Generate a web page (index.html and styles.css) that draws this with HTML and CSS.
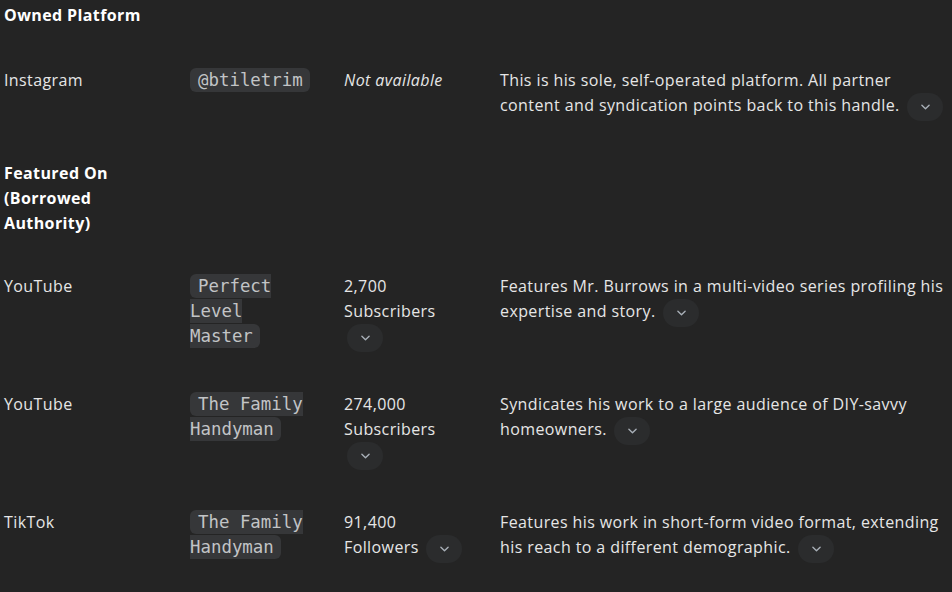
FILE: index.html
```html
<!DOCTYPE html>
<html lang="en">
<head>
<meta charset="utf-8">
<link rel="stylesheet" href="styles.css">
</head>
<body>
<table class="tbl">
  <colgroup>
    <col class="c1"><col class="c2"><col class="c3"><col class="c4">
  </colgroup>
  <tbody>
    <tr class="sec first">
      <td class="h">Owned Platform</td><td></td><td></td><td></td>
    </tr>
    <tr>
      <td>Instagram</td>
      <td><code class="chip">@btiletrim</code></td>
      <td><em>Not available</em></td>
      <td>This is his sole, self-operated platform. All partner content and syndication points back to this handle. <button class="pill" aria-label="expand"><svg viewBox="0 0 10 6" width="9" height="6"><path d="M1 1l4 4 4-4" fill="none" stroke="currentColor" stroke-width="1.5" stroke-linecap="round" stroke-linejoin="round"/></svg></button></td>
    </tr>
    <tr class="sec">
      <td class="h">Featured On (Borrowed Authority)</td><td></td><td></td><td></td>
    </tr>
    <tr>
      <td>YouTube</td>
      <td><code class="chip">Perfect Level Master</code></td>
      <td>2,700 Subscribers <button class="pill" aria-label="expand"><svg viewBox="0 0 10 6" width="9" height="6"><path d="M1 1l4 4 4-4" fill="none" stroke="currentColor" stroke-width="1.5" stroke-linecap="round" stroke-linejoin="round"/></svg></button></td>
      <td>Features Mr. Burrows in a multi-video series profiling his expertise and story. <button class="pill" aria-label="expand"><svg viewBox="0 0 10 6" width="9" height="6"><path d="M1 1l4 4 4-4" fill="none" stroke="currentColor" stroke-width="1.5" stroke-linecap="round" stroke-linejoin="round"/></svg></button></td>
    </tr>
    <tr>
      <td>YouTube</td>
      <td><code class="chip">The Family Handyman</code></td>
      <td>274,000 Subscribers <button class="pill" aria-label="expand"><svg viewBox="0 0 10 6" width="9" height="6"><path d="M1 1l4 4 4-4" fill="none" stroke="currentColor" stroke-width="1.5" stroke-linecap="round" stroke-linejoin="round"/></svg></button></td>
      <td>Syndicates his work to a large audience of DIY-savvy homeowners. <button class="pill" aria-label="expand"><svg viewBox="0 0 10 6" width="9" height="6"><path d="M1 1l4 4 4-4" fill="none" stroke="currentColor" stroke-width="1.5" stroke-linecap="round" stroke-linejoin="round"/></svg></button></td>
    </tr>
    <tr>
      <td>TikTok</td>
      <td><code class="chip">The Family Handyman</code></td>
      <td>91,400 Followers <button class="pill" aria-label="expand"><svg viewBox="0 0 10 6" width="9" height="6"><path d="M1 1l4 4 4-4" fill="none" stroke="currentColor" stroke-width="1.5" stroke-linecap="round" stroke-linejoin="round"/></svg></button></td>
      <td>Features his work in short-form video format, extending his reach to a different demographic. <button class="pill" aria-label="expand"><svg viewBox="0 0 10 6" width="9" height="6"><path d="M1 1l4 4 4-4" fill="none" stroke="currentColor" stroke-width="1.5" stroke-linecap="round" stroke-linejoin="round"/></svg></button></td>
    </tr>
  </tbody>
</table>
</body>
</html>
```
FILE: styles.css
```css
html, body {
  margin: 0;
  padding: 0;
  background: #242424;
}
body {
  font-family: "Open Sans", "Liberation Sans", sans-serif;
  font-size: 16px;
  line-height: 25px;
  letter-spacing: 0.4px;
  color: #e6e6e6;
  overflow: hidden;
}
.tbl {
  width: 952px;
  border-collapse: collapse;
  table-layout: fixed;
}
.c1 { width: 186px; }
.c2 { width: 154px; }
.c3 { width: 156px; }
.c4 { width: 456px; }
.tbl td {
  vertical-align: top;
  padding: 20px 16px 20px 4px;
  text-align: left;
}
.tbl td:nth-child(2) {
  padding-right: 30px;
}
.tbl td:nth-child(3) {
  padding-right: 27px;
}
.tbl td:last-child {
  padding-right: 4px;
}
.sec td {
  padding-bottom: 18px;
}
.first td {
  padding-top: 3px;
  padding-bottom: 20px;
}
.h {
  font-weight: 700;
  color: #ffffff;
}
em {
  font-style: italic;
}
.chip {
  font-family: "DejaVu Sans Mono", "Liberation Mono", monospace;
  font-size: 17.4px;
  letter-spacing: 0;
  color: #c2c4c6;
  background: #363739;
  border-radius: 6px;
  padding: 2px 7px 2px 8px;
  line-height: 25px;
}
.pill {
  display: inline-flex;
  align-items: center;
  justify-content: center;
  vertical-align: middle;
  width: 36px;
  height: 28px;
  margin: 0 0 0 3px;
  padding: 0;
  border: 0;
  border-radius: 14px;
  background: #2b2c2d;
  color: #a9b0b8;
}
```
